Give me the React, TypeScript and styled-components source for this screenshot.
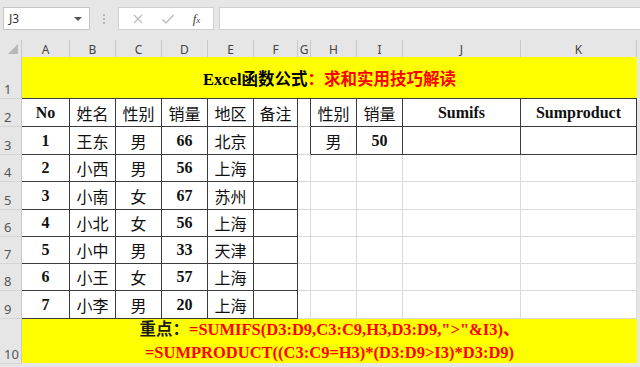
import { Fragment } from "react";
import styled, { createGlobalStyle } from "styled-components";

const GlobalStyle = createGlobalStyle`
  html, body {
    margin: 0;
    padding: 0;
    background: #e6e6e6;
  }
  body {
    width: 640px;
    height: 367px;
    overflow: hidden;
    font-family: "Liberation Serif", "Noto Sans CJK SC", serif;
  }
`;

const COLS = "22px 48px 46px 46px 46px 46px 44px 13px 46px 46px 118px 116px";
const LIGHT = "#dadada";
const DARK = "#3c3c3c";

const Page = styled.div`
  width: 640px;
  height: 367px;
  background: #e6e6e6;
  display: flex;
  flex-direction: column;
`;

const Toolbar = styled.div`
  height: 40px;
  display: flex;
  align-items: flex-start;
  padding-top: 7px;
  box-sizing: border-box;
  padding-left: 3px;
`;

const NameBox = styled.div`
  width: 87px;
  height: 23px;
  box-sizing: border-box;
  background: #fff;
  border: 1px solid #c6c6c6;
  display: flex;
  align-items: center;
  justify-content: space-between;
  padding: 0 7px 0 5px;
  font-family: "Noto Sans", "Liberation Sans", sans-serif;
  font-size: 12px;
  color: #333;
`;

const Caret = styled.span`
  width: 0;
  height: 0;
  border-left: 4px solid transparent;
  border-right: 4px solid transparent;
  border-top: 4px solid #555;
`;

const Grip = styled.div`
  width: 28px;
  height: 23px;
  display: flex;
  flex-direction: column;
  align-items: center;
  justify-content: center;
  gap: 2px;
  span {
    width: 2px;
    height: 2px;
    background: #b5b5b5;
  }
`;

const FxBox = styled.div`
  width: 96px;
  height: 23px;
  box-sizing: border-box;
  background: #fff;
  border: 1px solid #d0d0d0;
  display: flex;
  align-items: center;
  justify-content: space-around;
  padding: 0 4px;
`;

const FxText = styled.span`
  font-family: "Liberation Serif", serif;
  font-style: italic;
  font-size: 13px;
  color: #444;
  sub {
    font-size: 9px;
    vertical-align: 0;
  }
`;

const FormulaInput = styled.div`
  margin-left: 5px;
  flex: 1;
  height: 23px;
  box-sizing: border-box;
  background: #fff;
  border: 1px solid #d0d0d0;
  border-right: none;
`;

const ColHeaderRow = styled.div`
  display: grid;
  grid-template-columns: ${COLS};
  height: 17px;
`;

const ColHead = styled.div`
  background: #e6e6e6;
  border-right: 1px solid #c9c9c9;
  display: flex;
  align-items: flex-end;
  justify-content: center;
  font-family: "Noto Sans", "Liberation Sans", sans-serif;
  font-size: 12px;
  line-height: 15px;
  color: #444;
  overflow: hidden;
`;

const Corner = styled.div`
  background: #e6e6e6;
  border-right: 1px solid #c9c9c9;
  display: flex;
  align-items: flex-end;
  justify-content: flex-end;
  padding: 0 3px 3px 0;
  box-sizing: border-box;
`;

const Sheet = styled.div`
  display: grid;
  grid-template-columns: ${COLS};
  grid-template-rows: 42px 28px 28px 27px 28px 27px 27px 27px 28px 45px;
`;

const RowHead = styled.div`
  background: #e6e6e6;
  border-right: 1px solid #c9c9c9;
  border-bottom: 1px solid #d4d4d4;
  display: flex;
  align-items: flex-end;
  padding: 0 0 0 4px;
  font-family: "Noto Sans", "Liberation Sans", sans-serif;
  font-size: 13px;
  line-height: 17px;
  color: #555;
`;

const Cell = styled.div<{ $r?: boolean; $b?: boolean; $bold?: boolean }>`
  background: #fff;
  box-sizing: border-box;
  border-right: 1px solid ${(p) => (p.$r ? DARK : LIGHT)};
  border-bottom: 1px solid ${(p) => (p.$b ? DARK : LIGHT)};
  display: flex;
  align-items: center;
  justify-content: center;
  font-size: 16px;
  font-weight: ${(p) => (p.$bold ? 700 : 400)};
  color: #111;
  white-space: nowrap;
`;

const Banner = styled.div<{ $tall?: boolean }>`
  grid-column: 2 / span 11;
  background: #ffff00;
  box-sizing: border-box;
  border-bottom: 1px solid ${(p) => (p.$tall ? "#e6e6e6" : DARK)};
  display: flex;
  flex-direction: column;
  align-items: center;
  justify-content: center;
  font-weight: 700;
  text-align: center;
  white-space: nowrap;
`;

const Title = styled.div`
  font-size: 16.5px;
  color: #000;
`;

const Note = styled.div`
  font-size: 16.5px;
  line-height: 22px;
  color: #ff0000;
  padding-top: 1px;
`;

const Red = styled.span`
  color: #ff0000;
`;

const Dark = styled.span`
  color: #1a1a1a;
`;

const letters = ["A", "B", "C", "D", "E", "F", "G", "H", "I", "J", "K"];

const people = [
  ["1", "王东", "男", "66", "北京"],
  ["2", "小西", "男", "56", "上海"],
  ["3", "小南", "女", "67", "苏州"],
  ["4", "小北", "女", "56", "上海"],
  ["5", "小中", "男", "33", "天津"],
  ["6", "小王", "女", "57", "上海"],
  ["7", "小李", "男", "20", "上海"],
];

const App = () => {
  return (
    <Page>
      <GlobalStyle />
      <Toolbar>
        <NameBox>
          <span>J3</span>
          <Caret />
        </NameBox>
        <Grip>
          <span />
          <span />
          <span />
        </Grip>
        <FxBox>
          <svg width="12" height="12" viewBox="0 0 12 12">
            <path d="M2 2 L10 10 M10 2 L2 10" stroke="#bdbdbd" strokeWidth="1.3" fill="none" />
          </svg>
          <svg width="14" height="12" viewBox="0 0 14 12">
            <path d="M1.5 6.5 L5 10 L12.5 2" stroke="#bdbdbd" strokeWidth="1.5" fill="none" />
          </svg>
          <FxText>
            f<sub>x</sub>
          </FxText>
        </FxBox>
        <FormulaInput />
      </Toolbar>

      <ColHeaderRow>
        <Corner>
          <svg width="10" height="10" viewBox="0 0 10 10">
            <path d="M10 0 L10 10 L0 10 Z" fill="#b8b8b8" />
          </svg>
        </Corner>
        {letters.map((l) => (
          <ColHead key={l}>{l}</ColHead>
        ))}
      </ColHeaderRow>

      <Sheet>
        <RowHead>1</RowHead>
        <Banner>
          <Title>
            Excel函数公式<Red>：求和实用技巧解读</Red>
          </Title>
        </Banner>

        <RowHead>2</RowHead>
        <Cell $r $b $bold>No</Cell>
        <Cell $r $b>姓名</Cell>
        <Cell $r $b>性别</Cell>
        <Cell $r $b>销量</Cell>
        <Cell $r $b>地区</Cell>
        <Cell $r $b>备注</Cell>
        <Cell $r />
        <Cell $r $b>性别</Cell>
        <Cell $r $b>销量</Cell>
        <Cell $r $b $bold>Sumifs</Cell>
        <Cell $r $b $bold>Sumproduct</Cell>

        {people.map((p, i) => (
          <Fragment key={p[0]}>
            <RowHead>{i + 3}</RowHead>
            <Cell $r $b $bold>{p[0]}</Cell>
            <Cell $r $b>{p[1]}</Cell>
            <Cell $r $b>{p[2]}</Cell>
            <Cell $r $b $bold>{p[3]}</Cell>
            <Cell $r $b>{p[4]}</Cell>
            <Cell $r $b />
            <Cell $r={i === 0} />
            {i === 0 ? (
              <>
                <Cell $r $b>男</Cell>
                <Cell $r $b $bold>50</Cell>
                <Cell $r $b />
                <Cell $r $b />
              </>
            ) : (
              <>
                <Cell />
                <Cell />
                <Cell />
                <Cell />
              </>
            )}
          </Fragment>
        ))}

        <RowHead>10</RowHead>
        <Banner $tall>
          <Note>
            <Dark>重点：</Dark>=SUMIFS(D3:D9,C3:C9,H3,D3:D9,"&gt;"&amp;I3)、
          </Note>
          <Note>=SUMPRODUCT((C3:C9=H3)*(D3:D9&gt;I3)*D3:D9)</Note>
        </Banner>
      </Sheet>
    </Page>
  );
};

export default App;
